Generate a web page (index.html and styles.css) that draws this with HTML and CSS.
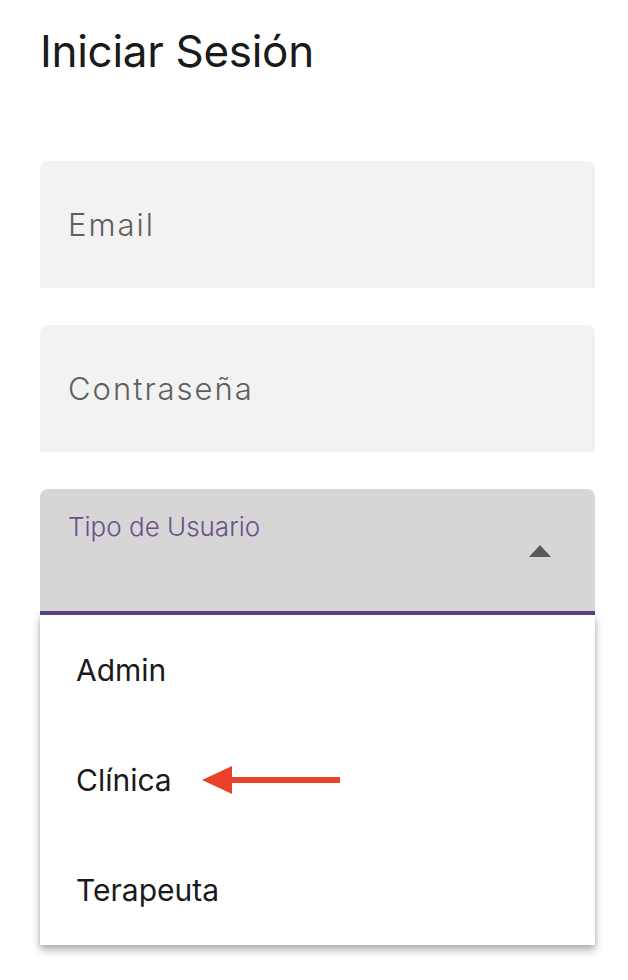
FILE: index.html
```html
<!DOCTYPE html>
<html lang="es">
<head>
<meta charset="utf-8">
<title>Iniciar Sesión</title>
<link rel="stylesheet" href="styles.css">
</head>
<body>
<main class="page">
  <h1 class="title">Iniciar Sesión</h1>
  <form class="form">
    <div class="field"><span class="placeholder">Email</span></div>
    <div class="field"><span class="placeholder">Contraseña</span></div>
    <div class="select">
      <span class="select-label">Tipo de Usuario</span>
      <svg class="caret" width="22" height="12" viewBox="0 0 22 12"><polygon points="11,0 22,12 0,12" fill="#5a5a5a"/></svg>
    </div>
    <ul class="menu">
      <li class="menu-item">Admin</li>
      <li class="menu-item">Clínica
        <svg class="arrow" width="140" height="32" viewBox="0 0 140 32"><polygon points="0,16 30,2 30,13 138,13 138,19 30,19 30,30" fill="#e8432a"/></svg>
      </li>
      <li class="menu-item">Terapeuta</li>
    </ul>
  </form>
</main>
</body>
</html>
```
FILE: styles.css
```css
* { box-sizing: border-box; }
html, body { margin: 0; padding: 0; background: #fff; }
body { font-family: "Inter", "Noto Sans", sans-serif; color: #1c1c1c; }
.page { width: 628px; min-height: 980px; padding: 24px 33px 35px 40px; }
.title { margin: 0; font-size: 44px; font-weight: 400; line-height: 54px; color: #1a1a1a; letter-spacing: -0.3px; }
.form { margin-top: 83px; display: flex; flex-direction: column; }
.field {
  height: 127px; background: #f2f2f2; border-radius: 8px 8px 0 0;
  display: flex; align-items: center; padding-left: 28px; margin-bottom: 37px;
}
.placeholder { font-size: 31px; color: #5f5f5f; font-weight: 300; letter-spacing: 2px; }
.select {
  height: 126px; background: #d6d6d6; border-radius: 8px 8px 0 0;
  border-bottom: 4px solid #5b3f86; position: relative; padding: 20px 28px 0;
}
.select-label { font-size: 26px; color: #6b5089; line-height: 36px; display: block; font-weight: 300; }
.caret { position: absolute; right: 44px; top: 56px; }
.menu {
  list-style: none; margin: 0; padding: 0; background: #fff;
  box-shadow: 0 5px 8px rgba(0,0,0,0.3), 0 0 4px rgba(0,0,0,0.12);
  height: 330px;
}
.menu-item {
  height: 110px; display: flex; align-items: center; padding-left: 36px;
  font-size: 30px; color: #1a1a1a; position: relative;
}
.arrow { margin-left: 30px; }
```
